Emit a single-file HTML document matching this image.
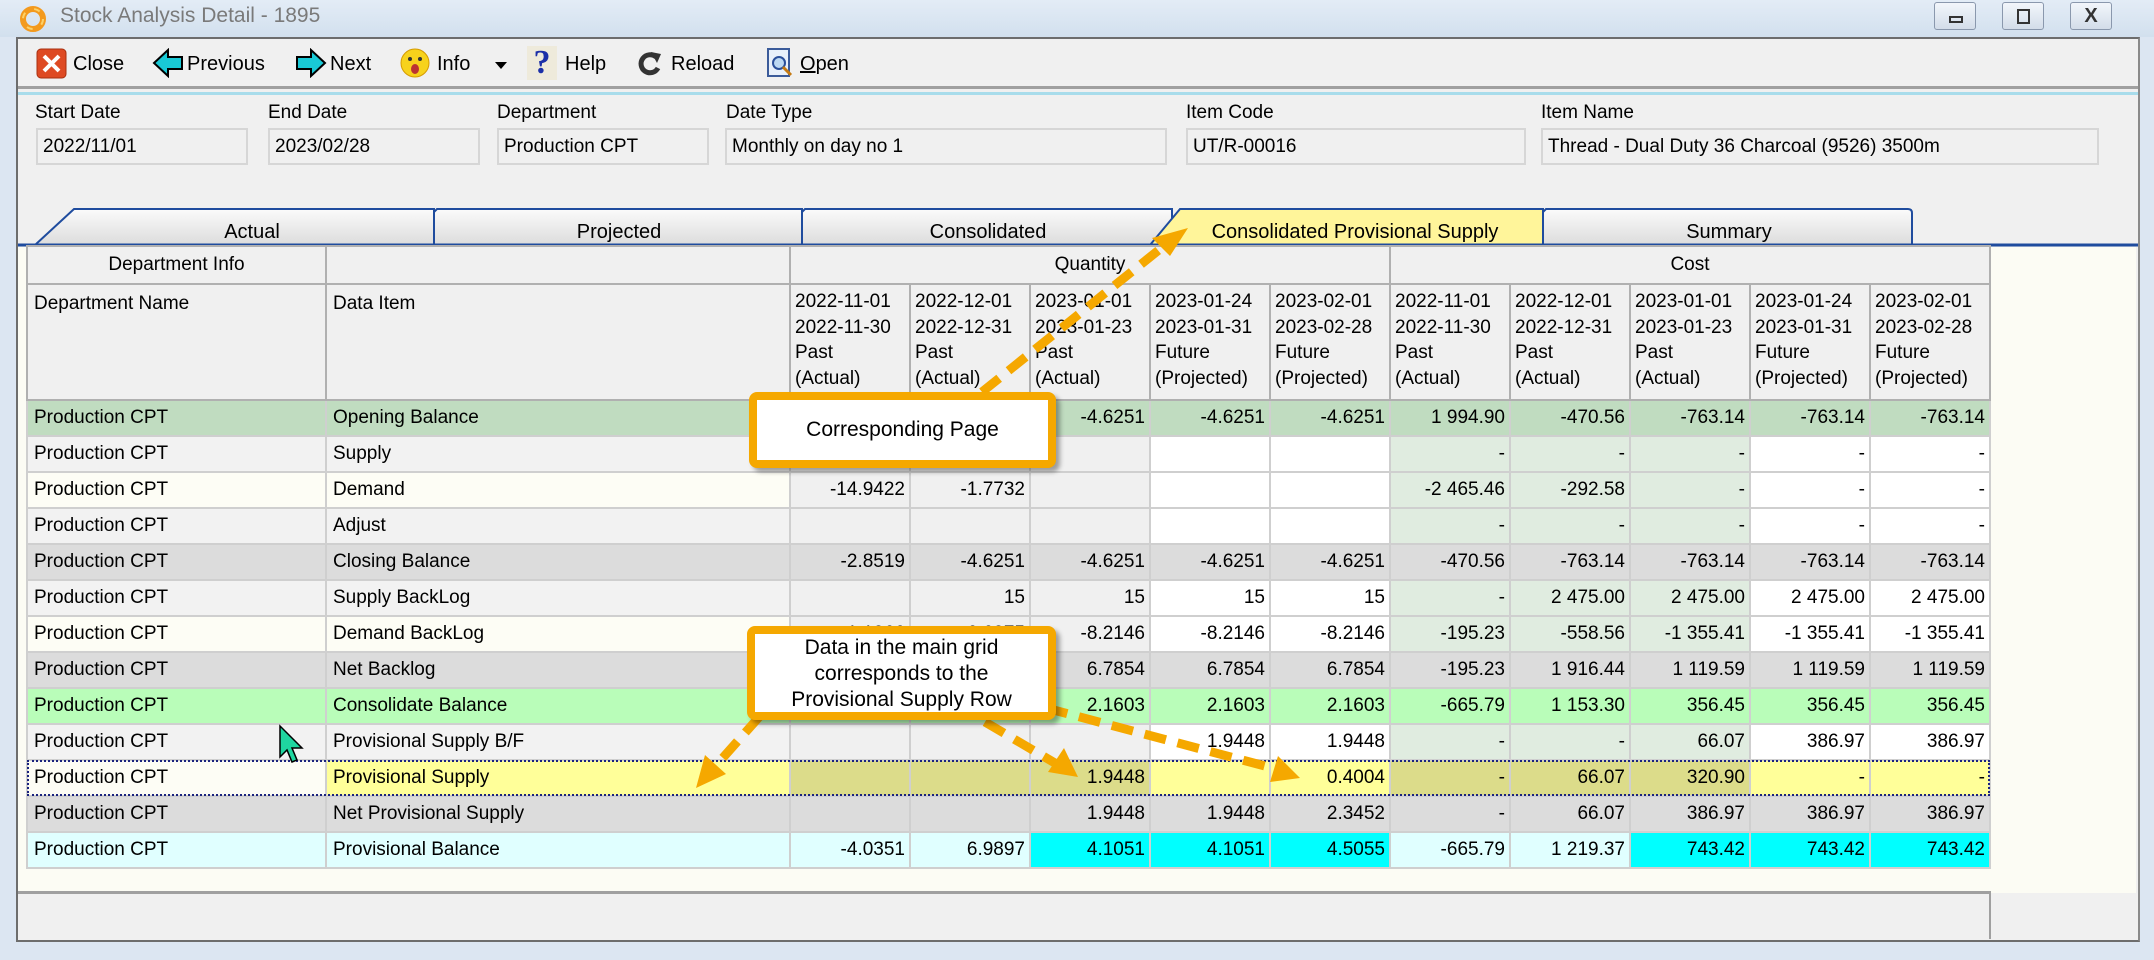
<!DOCTYPE html>
<html><head><meta charset="utf-8">
<style>
*{box-sizing:border-box;margin:0;padding:0}
body{width:2154px;height:960px;overflow:hidden;background:#dce6f2;font-family:"Liberation Sans",Arial,sans-serif;font-size:19px;color:#000;position:relative}
.abs{position:absolute}
#title{left:0;top:0;width:2154px;height:37px;background:linear-gradient(#e3ecf6,#d2e0ee)}
#win{left:16px;top:37px;width:2124px;height:905px;background:#f0f0f0;border:2px solid #6d6d6d;border-right-color:#8a8a8a}
.tb{font-size:20px;top:53px}
.lbl{font-size:19px;top:102px}
.box{top:128px;height:37px;background:#f0f0f0;border:2px solid #d6d6d6;font-size:19px;padding:6px 0 0 5px}
table{position:absolute;left:26px;top:245px;border-collapse:collapse;table-layout:fixed}
td{border:2px solid #cfcfcf;height:36px;padding:0 4px;white-space:nowrap;overflow:hidden;text-align:right;font-size:19px}
td.l{text-align:left;padding-left:6px}
tr.h td{background:#f0f0f0;border-color:#b0b0b0;vertical-align:top;text-align:left;line-height:25.5px}
.callout{background:#fff;border:8px solid #f5a800;border-radius:8px;box-shadow:4px 4px 5px rgba(0,0,0,.35);text-align:center;font-size:21px}
.wb{top:2px;width:42px;height:28px;border:1px solid #8a98ad;border-radius:3px;background:linear-gradient(#f2f6fb,#d3dde9)}
</style></head><body>
<div id="title" class="abs"></div>
<svg class="abs" style="left:18px;top:4px" width="30" height="30" viewBox="0 0 30 30"><circle cx="15" cy="15" r="10" fill="none" stroke="#f39a1e" stroke-width="6"/><circle cx="15" cy="15" r="10" fill="none" stroke="#fcd26a" stroke-width="2" stroke-dasharray="6 10"/></svg>
<div class="abs" style="left:60px;top:4px;font-size:21px;color:#7a7a7a">Stock Analysis Detail - 1895</div>
<div class="abs wb" style="left:1934px"><div class="abs" style="left:14px;top:13px;width:14px;height:7px;border:2px solid #333"></div></div>
<div class="abs wb" style="left:2002px"><div class="abs" style="left:14px;top:6px;width:13px;height:15px;border:2px solid #333"></div></div>
<div class="abs wb" style="left:2070px;font-size:20px;text-align:center;line-height:26px;color:#333;font-weight:bold">X</div>

<div id="win" class="abs"></div>
<!-- toolbar -->
<svg class="abs" style="left:36px;top:48px" width="31" height="31"><rect x="1" y="1" width="29" height="29" rx="4" fill="#de4a23" stroke="#a8300f"/><path d="M8 8 L23 23 M23 8 L8 23" stroke="#fff" stroke-width="4"/></svg>
<div class="abs tb" style="left:73px">Close</div>
<svg class="abs" style="left:152px;top:48px" width="32" height="30"><polygon points="2,15 16,2 16,9 30,9 30,21 16,21 16,28" fill="#19c9d6" stroke="#000" stroke-width="2"/></svg>
<div class="abs tb" style="left:187px">Previous</div>
<svg class="abs" style="left:295px;top:48px" width="32" height="30"><polygon points="30,15 16,2 16,9 2,9 2,21 16,21 16,28" fill="#19c9d6" stroke="#000" stroke-width="2"/></svg>
<div class="abs tb" style="left:330px">Next</div>
<svg class="abs" style="left:399px;top:47px" width="32" height="32"><circle cx="16" cy="16" r="14" fill="#f7d21c" stroke="#d69b00"/><circle cx="11" cy="12" r="2" fill="#333"/><circle cx="21" cy="12" r="2" fill="#333"/><ellipse cx="16" cy="22" rx="4" ry="5" fill="#b33" /></svg>
<div class="abs tb" style="left:437px">Info</div>
<div class="abs" style="left:495px;top:62px;border-left:6px solid transparent;border-right:6px solid transparent;border-top:7px solid #000"></div>
<div class="abs" style="left:527px;top:46px;width:30px;height:34px;background:#eeeadb;color:#1b2fa8;font-size:34px;font-weight:bold;line-height:34px;text-align:center;font-family:'Liberation Serif',serif">?</div>
<div class="abs tb" style="left:565px">Help</div>
<svg class="abs" style="left:636px;top:50px" width="28" height="28"><path d="M20 7 A9 9 0 1 0 22 18" fill="none" stroke="#333" stroke-width="5"/><polygon points="15,2 25,4 21,13" fill="#333"/></svg>
<div class="abs tb" style="left:671px">Reload</div>
<svg class="abs" style="left:765px;top:48px" width="30" height="30"><rect x="3" y="1" width="21" height="27" fill="#e8f0fa" stroke="#3b5b9a" stroke-width="2"/><circle cx="14" cy="15" r="6" fill="#bcd8f2" stroke="#2a4f9a" stroke-width="2"/><path d="M18 19 L26 27" stroke="#c57a12" stroke-width="3"/></svg>
<div class="abs tb" style="left:800px"><u>O</u>pen</div>
<div class="abs" style="left:18px;top:86px;width:2120px;height:3px;background:#a0a0a0"></div>
<div class="abs" style="left:18px;top:92px;width:2120px;height:3px;background:#a8dceb"></div>

<!-- fields -->
<div class="abs lbl" style="left:35px">Start Date</div>
<div class="abs lbl" style="left:268px">End Date</div>
<div class="abs lbl" style="left:497px">Department</div>
<div class="abs lbl" style="left:726px">Date Type</div>
<div class="abs lbl" style="left:1186px">Item Code</div>
<div class="abs lbl" style="left:1541px">Item Name</div>
<div class="abs box" style="left:36px;width:212px">2022/11/01</div>
<div class="abs box" style="left:268px;width:212px">2023/02/28</div>
<div class="abs box" style="left:497px;width:212px">Production CPT</div>
<div class="abs box" style="left:725px;width:442px">Monthly on day no 1</div>
<div class="abs box" style="left:1186px;width:340px">UT/R-00016</div>
<div class="abs box" style="left:1541px;width:558px">Thread - Dual Duty 36 Charcoal (9526) 3500m</div>

<!-- tabs -->
<svg class="abs" style="left:0;top:200px" width="2154" height="50">
<defs><linearGradient id="tg" x1="0" y1="0" x2="0" y2="1"><stop offset="0" stop-color="#fbfbfb"/><stop offset="1" stop-color="#dcdcdc"/></linearGradient></defs>
<path d="M35,45 L74,9 L434,9 L434,45Z" fill="url(#tg)" stroke="#1f4c9e" stroke-width="2"/>
<path d="M434,45 L434,12 L437,9 L802,9 L802,45Z" fill="url(#tg)" stroke="#1f4c9e" stroke-width="2"/>
<path d="M802,45 L802,12 L805,9 L1172,9 L1172,45Z" fill="url(#tg)" stroke="#1f4c9e" stroke-width="2"/>
<path d="M1543,45 L1543,12 L1546,9 L1908,9 Q1912,9 1912,13 L1912,45Z" fill="url(#tg)" stroke="#1f4c9e" stroke-width="2"/>
<path d="M1150,45 L1180,9 L1543,9 L1543,45Z" fill="#fff59a" stroke="#1f4c9e" stroke-width="2"/>
<line x1="18" y1="45" x2="2138" y2="45" stroke="#1f4c9e" stroke-width="3"/>
<text x="252" y="38" font-size="20" text-anchor="middle" font-family="Liberation Sans">Actual</text>
<text x="619" y="38" font-size="20" text-anchor="middle" font-family="Liberation Sans">Projected</text>
<text x="988" y="38" font-size="20" text-anchor="middle" font-family="Liberation Sans">Consolidated</text>
<text x="1355" y="38" font-size="20" text-anchor="middle" font-family="Liberation Sans">Consolidated Provisional Supply</text>
<text x="1729" y="38" font-size="20" text-anchor="middle" font-family="Liberation Sans">Summary</text>
</svg>

<!-- grid area bg -->
<div class="abs" style="left:18px;top:247px;width:2118px;height:646px;background:#fcfcf4"></div>
<div class="abs" style="left:18px;top:891px;width:1973px;height:3px;background:#a0a0a0"></div>
<div class="abs" style="left:18px;top:894px;width:1973px;height:45px;background:#f0f0f0;border-right:2px solid #a0a0a0"></div>

<table>
<colgroup><col style="width:299px"><col style="width:464px"><col style="width:120px"><col style="width:120px"><col style="width:120px"><col style="width:120px"><col style="width:120px"><col style="width:120px"><col style="width:120px"><col style="width:120px"><col style="width:120px"><col style="width:120px"></colgroup>
<tr class="h"><td style="height:38px;text-align:center;vertical-align:middle">Department Info</td><td></td><td colspan="5" style="text-align:center;vertical-align:middle">Quantity</td><td colspan="5" style="text-align:center;vertical-align:middle">Cost</td></tr>
<tr class="h" style="height:116px"><td class="l" style="padding-top:6px">Department Name</td><td class="l" style="padding-top:6px">Data Item</td>
<td style="padding-top:4px">2022-11-01<br>2022-11-30<br>Past<br>(Actual)</td><td style="padding-top:4px">2022-12-01<br>2022-12-31<br>Past<br>(Actual)</td><td style="padding-top:4px">2023-01-01<br>2023-01-23<br>Past<br>(Actual)</td><td style="padding-top:4px">2023-01-24<br>2023-01-31<br>Future<br>(Projected)</td><td style="padding-top:4px">2023-02-01<br>2023-02-28<br>Future<br>(Projected)</td>
<td style="padding-top:4px">2022-11-01<br>2022-11-30<br>Past<br>(Actual)</td><td style="padding-top:4px">2022-12-01<br>2022-12-31<br>Past<br>(Actual)</td><td style="padding-top:4px">2023-01-01<br>2023-01-23<br>Past<br>(Actual)</td><td style="padding-top:4px">2023-01-24<br>2023-01-31<br>Future<br>(Projected)</td><td style="padding-top:4px">2023-02-01<br>2023-02-28<br>Future<br>(Projected)</td></tr>

<tr style="background:#c0dcc0"><td class="l">Production CPT</td><td class="l">Opening Balance</td><td></td><td></td><td>-4.6251</td><td>-4.6251</td><td>-4.6251</td><td>1 994.90</td><td>-470.56</td><td>-763.14</td><td>-763.14</td><td>-763.14</td></tr>
<tr><td class="l" style="background:#f2f2f2">Production CPT</td><td class="l" style="background:#f2f2f2">Supply</td><td style="background:#f0f0f0"></td><td style="background:#f0f0f0"></td><td style="background:#f0f0f0"></td><td style="background:#fff"></td><td style="background:#fff"></td><td style="background:#e0ece0">-</td><td style="background:#e0ece0">-</td><td style="background:#e0ece0">-</td><td style="background:#fff">-</td><td style="background:#fff">-</td></tr>
<tr><td class="l" style="background:#fdfdf5">Production CPT</td><td class="l" style="background:#fdfdf5">Demand</td><td style="background:#f0f0f0">-14.9422</td><td style="background:#f0f0f0">-1.7732</td><td style="background:#f0f0f0"></td><td style="background:#fff"></td><td style="background:#fff"></td><td style="background:#e0ece0">-2 465.46</td><td style="background:#e0ece0">-292.58</td><td style="background:#e0ece0">-</td><td style="background:#fff">-</td><td style="background:#fff">-</td></tr>
<tr><td class="l" style="background:#f2f2f2">Production CPT</td><td class="l" style="background:#f2f2f2">Adjust</td><td style="background:#f0f0f0"></td><td style="background:#f0f0f0"></td><td style="background:#f0f0f0"></td><td style="background:#fff"></td><td style="background:#fff"></td><td style="background:#e0ece0">-</td><td style="background:#e0ece0">-</td><td style="background:#e0ece0">-</td><td style="background:#fff">-</td><td style="background:#fff">-</td></tr>
<tr style="background:#dcdcdc"><td class="l">Production CPT</td><td class="l">Closing Balance</td><td>-2.8519</td><td>-4.6251</td><td>-4.6251</td><td>-4.6251</td><td>-4.6251</td><td>-470.56</td><td>-763.14</td><td>-763.14</td><td>-763.14</td><td>-763.14</td></tr>
<tr><td class="l" style="background:#f2f2f2">Production CPT</td><td class="l" style="background:#f2f2f2">Supply BackLog</td><td style="background:#f0f0f0"></td><td style="background:#f0f0f0">15</td><td style="background:#f0f0f0">15</td><td style="background:#fff">15</td><td style="background:#fff">15</td><td style="background:#e0ece0">-</td><td style="background:#e0ece0">2 475.00</td><td style="background:#e0ece0">2 475.00</td><td style="background:#fff">2 475.00</td><td style="background:#fff">2 475.00</td></tr>
<tr><td class="l" style="background:#fdfdf5">Production CPT</td><td class="l" style="background:#fdfdf5">Demand BackLog</td><td style="background:#f0f0f0">-1.1066</td><td style="background:#f0f0f0">-6.6075</td><td style="background:#f0f0f0">-8.2146</td><td style="background:#fff">-8.2146</td><td style="background:#fff">-8.2146</td><td style="background:#e0ece0">-195.23</td><td style="background:#e0ece0">-558.56</td><td style="background:#e0ece0">-1 355.41</td><td style="background:#fff">-1 355.41</td><td style="background:#fff">-1 355.41</td></tr>
<tr style="background:#dcdcdc"><td class="l">Production CPT</td><td class="l">Net Backlog</td><td></td><td></td><td>6.7854</td><td>6.7854</td><td>6.7854</td><td>-195.23</td><td>1 916.44</td><td>1 119.59</td><td>1 119.59</td><td>1 119.59</td></tr>
<tr style="background:#b9fdb9"><td class="l">Production CPT</td><td class="l">Consolidate Balance</td><td></td><td></td><td>2.1603</td><td>2.1603</td><td>2.1603</td><td>-665.79</td><td>1 153.30</td><td>356.45</td><td>356.45</td><td>356.45</td></tr>
<tr><td class="l" style="background:#f2f2f2">Production CPT</td><td class="l" style="background:#f2f2f2">Provisional Supply B/F</td><td style="background:#f0f0f0"></td><td style="background:#f0f0f0"></td><td style="background:#f0f0f0"></td><td style="background:#fff">1.9448</td><td style="background:#fff">1.9448</td><td style="background:#e0ece0">-</td><td style="background:#e0ece0">-</td><td style="background:#e0ece0">66.07</td><td style="background:#fff">386.97</td><td style="background:#fff">386.97</td></tr>
<tr style="outline:2px dotted #1a237e;outline-offset:-2px"><td class="l" style="background:#fdfdf5">Production CPT</td><td class="l" style="background:#ffff99">Provisional Supply</td><td style="background:#dcdc8a"></td><td style="background:#dcdc8a"></td><td style="background:#dcdc8a">1.9448</td><td style="background:#ffff99"></td><td style="background:#ffff99">0.4004</td><td style="background:#dcdc8a">-</td><td style="background:#dcdc8a">66.07</td><td style="background:#dcdc8a">320.90</td><td style="background:#ffff99">-</td><td style="background:#ffff99">-</td></tr>
<tr style="background:#dcdcdc"><td class="l">Production CPT</td><td class="l">Net Provisional Supply</td><td></td><td></td><td>1.9448</td><td>1.9448</td><td>2.3452</td><td>-</td><td>66.07</td><td>386.97</td><td>386.97</td><td>386.97</td></tr>
<tr style="background:#e0ffff"><td class="l">Production CPT</td><td class="l">Provisional Balance</td><td>-4.0351</td><td>6.9897</td><td style="background:#00ffff">4.1051</td><td style="background:#00ffff">4.1051</td><td style="background:#00ffff">4.5055</td><td>-665.79</td><td>1 219.37</td><td style="background:#00ffff">743.42</td><td style="background:#00ffff">743.42</td><td style="background:#00ffff">743.42</td></tr>
</table>

<!-- arrows -->
<svg class="abs" style="left:0;top:0" width="2154" height="960">
<g stroke="#f5a800" stroke-width="9" stroke-dasharray="22 12" fill="none">
<line x1="982" y1="392" x2="1165" y2="245"/>
<line x1="760" y1="716" x2="712" y2="770"/>
<line x1="985" y1="722" x2="1060" y2="766"/>
<line x1="1046" y1="708" x2="1280" y2="770"/>
</g>
<g fill="#f5a800">
<polygon points="1188,228 1152,238 1170,256"/>
<polygon points="696,788 705,755 726,774"/>
<polygon points="1078,777 1048,772 1064,748"/>
<polygon points="1300,778 1270,782 1278,756"/>
</g>
<polygon points="280,726 280,757 287,750 292,762 297,760 292,748 302,748" fill="#1fd6a0" stroke="#000" stroke-width="1.5"/>
</svg>

<div class="abs callout" style="left:749px;top:392px;width:307px;height:76px;line-height:60px">Corresponding Page</div>
<div class="abs callout" style="left:747px;top:626px;width:309px;height:94px;line-height:26px;padding-top:1px">Data in the main grid<br>corresponds to the<br>Provisional Supply Row</div>
</body></html>
